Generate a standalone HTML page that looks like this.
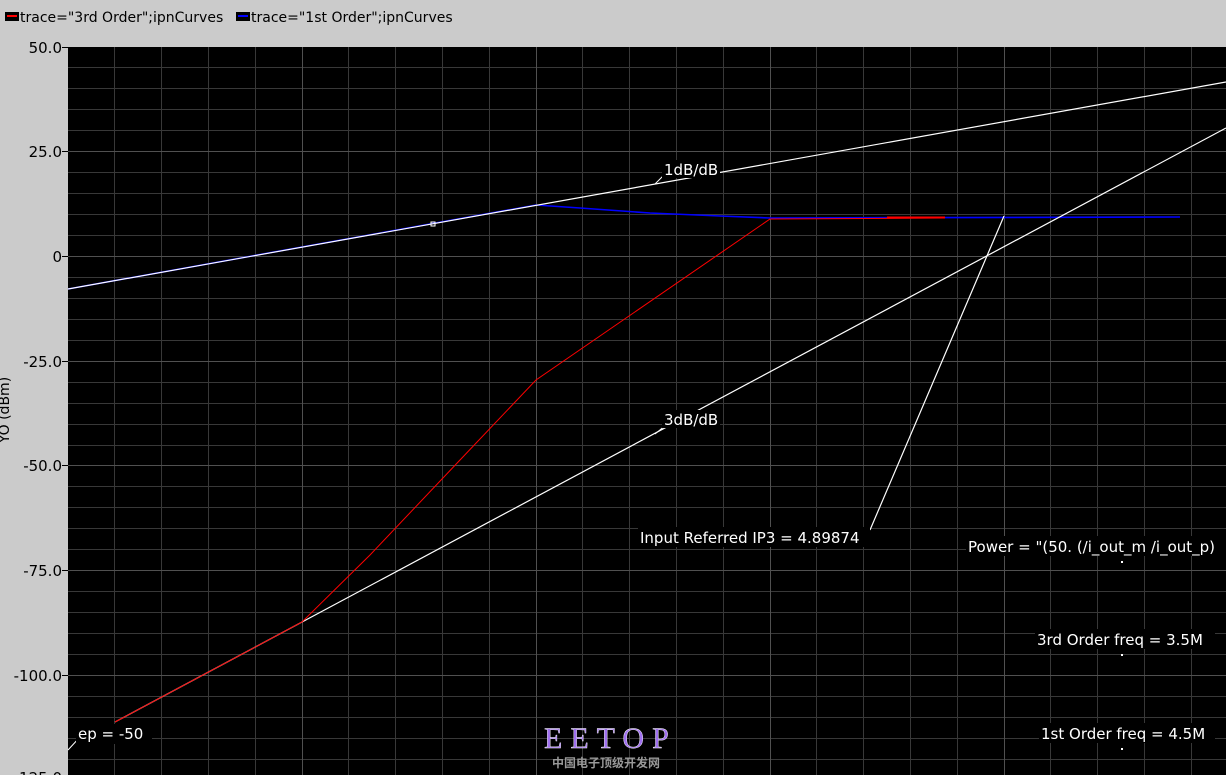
<!DOCTYPE html>
<html><head><style>
html,body{margin:0;padding:0;width:1226px;height:775px;overflow:hidden;background:#cbcbcb;font-family:"DejaVu Sans","Liberation Sans",sans-serif;}
</style></head><body>
<svg width="1226" height="775" xmlns="http://www.w3.org/2000/svg" style="position:absolute;left:0;top:0;font-family:'DejaVu Sans','Liberation Sans',sans-serif">
<rect x="0" y="0" width="1226" height="775" fill="#cbcbcb"/>
<rect x="5" y="12" width="14" height="9" fill="#000"/><line x1="7" y1="16" x2="17" y2="16" stroke="#f00" stroke-width="2"/>
<text x="20" y="22" font-size="14" fill="#000">trace="3rd Order";ipnCurves</text>
<rect x="236" y="12" width="14" height="9" fill="#000"/><line x1="238" y1="16" x2="248" y2="16" stroke="#00f" stroke-width="2"/>
<text x="251" y="22" font-size="14" fill="#000">trace="1st Order";ipnCurves</text>
<rect x="68" y="47" width="1158" height="728" fill="#000"/>
<g stroke="#383838" stroke-width="1">
<line x1="114.5" y1="47" x2="114.5" y2="775"/><line x1="161.5" y1="47" x2="161.5" y2="775"/><line x1="208.5" y1="47" x2="208.5" y2="775"/><line x1="255.5" y1="47" x2="255.5" y2="775"/>
<line x1="348.5" y1="47" x2="348.5" y2="775"/><line x1="395.5" y1="47" x2="395.5" y2="775"/><line x1="442.5" y1="47" x2="442.5" y2="775"/><line x1="489.5" y1="47" x2="489.5" y2="775"/>
<line x1="582.5" y1="47" x2="582.5" y2="775"/><line x1="629.5" y1="47" x2="629.5" y2="775"/><line x1="676.5" y1="47" x2="676.5" y2="775"/><line x1="723.5" y1="47" x2="723.5" y2="775"/>
<line x1="816.5" y1="47" x2="816.5" y2="775"/><line x1="863.5" y1="47" x2="863.5" y2="775"/><line x1="910.5" y1="47" x2="910.5" y2="775"/><line x1="957.5" y1="47" x2="957.5" y2="775"/>
<line x1="1050.5" y1="47" x2="1050.5" y2="775"/><line x1="1097.5" y1="47" x2="1097.5" y2="775"/><line x1="1144.5" y1="47" x2="1144.5" y2="775"/><line x1="1191.5" y1="47" x2="1191.5" y2="775"/>
<line x1="68" y1="67.5" x2="1226" y2="67.5"/><line x1="68" y1="88.5" x2="1226" y2="88.5"/><line x1="68" y1="109.5" x2="1226" y2="109.5"/><line x1="68" y1="130.5" x2="1226" y2="130.5"/>
<line x1="68" y1="172.5" x2="1226" y2="172.5"/><line x1="68" y1="193.5" x2="1226" y2="193.5"/><line x1="68" y1="214.5" x2="1226" y2="214.5"/><line x1="68" y1="235.5" x2="1226" y2="235.5"/>
<line x1="68" y1="277.5" x2="1226" y2="277.5"/><line x1="68" y1="298.5" x2="1226" y2="298.5"/><line x1="68" y1="319.5" x2="1226" y2="319.5"/><line x1="68" y1="340.5" x2="1226" y2="340.5"/>
<line x1="68" y1="382.5" x2="1226" y2="382.5"/><line x1="68" y1="403.5" x2="1226" y2="403.5"/><line x1="68" y1="424.5" x2="1226" y2="424.5"/><line x1="68" y1="445.5" x2="1226" y2="445.5"/>
<line x1="68" y1="486.5" x2="1226" y2="486.5"/><line x1="68" y1="507.5" x2="1226" y2="507.5"/><line x1="68" y1="528.5" x2="1226" y2="528.5"/><line x1="68" y1="549.5" x2="1226" y2="549.5"/>
<line x1="68" y1="591.5" x2="1226" y2="591.5"/><line x1="68" y1="612.5" x2="1226" y2="612.5"/><line x1="68" y1="633.5" x2="1226" y2="633.5"/><line x1="68" y1="654.5" x2="1226" y2="654.5"/>
<line x1="68" y1="696.5" x2="1226" y2="696.5"/><line x1="68" y1="717.5" x2="1226" y2="717.5"/><line x1="68" y1="738.5" x2="1226" y2="738.5"/><line x1="68" y1="759.5" x2="1226" y2="759.5"/>
</g>
<g stroke="#505050" stroke-width="1">
<line x1="302.5" y1="47" x2="302.5" y2="775"/><line x1="536.5" y1="47" x2="536.5" y2="775"/><line x1="770.5" y1="47" x2="770.5" y2="775"/><line x1="1004.5" y1="47" x2="1004.5" y2="775"/>
<line x1="68" y1="151.5" x2="1226" y2="151.5"/><line x1="68" y1="256.5" x2="1226" y2="256.5"/><line x1="68" y1="361.5" x2="1226" y2="361.5"/><line x1="68" y1="465.5" x2="1226" y2="465.5"/><line x1="68" y1="570.5" x2="1226" y2="570.5"/><line x1="68" y1="675.5" x2="1226" y2="675.5"/>
</g>
<g stroke="#000" stroke-width="1">
<line x1="62" y1="47.5" x2="68" y2="47.5"/><line x1="62" y1="151.5" x2="68" y2="151.5"/><line x1="62" y1="256.5" x2="68" y2="256.5"/><line x1="62" y1="361.5" x2="68" y2="361.5"/><line x1="62" y1="465.5" x2="68" y2="465.5"/><line x1="62" y1="570.5" x2="68" y2="570.5"/><line x1="62" y1="675.5" x2="68" y2="675.5"/>
</g>
<g font-size="15" fill="#000" text-anchor="end">
<text x="62" y="53">50.0</text><text x="62" y="157">25.0</text><text x="62" y="262">0</text><text x="62" y="367">-25.0</text><text x="62" y="471">-50.0</text><text x="62" y="576">-75.0</text><text x="62" y="681">-100.0</text><text x="62" y="783">-125.0</text>
</g>
<text transform="translate(9,410) rotate(-90)" font-size="14" fill="#000" text-anchor="middle">YO (dBm)</text>
<!-- blue 1st order -->
<polyline points="68,289 536,205 580,208 650,213 720,216 770,218 1180,217" fill="none" stroke="#00f" stroke-width="1.6"/>
<!-- 1dB/dB line -->
<line x1="68" y1="289" x2="1226" y2="82" stroke="#fff" stroke-width="1.2"/>
<!-- 3dB/dB line -->
<line x1="115" y1="722" x2="1226" y2="128" stroke="#fff" stroke-width="1.2"/>
<!-- red 3rd order -->
<polyline points="115,722 302,622 370,555 460,460 536,380 770,219 945,218" fill="none" stroke="#f00" stroke-width="1"/>
<line x1="887" y1="217.5" x2="945" y2="217.5" stroke="#f00" stroke-width="2"/>
<rect x="431" y="222" width="4" height="4" fill="none" stroke="#fff" stroke-width="1"/>
<line x1="870" y1="530" x2="1004" y2="216" stroke="#fff" stroke-width="1.2"/>
<line x1="655" y1="184" x2="665" y2="174" stroke="#fff"/>
<line x1="655" y1="434" x2="666" y2="425" stroke="#fff"/>
<line x1="68" y1="750" x2="80" y2="737" stroke="#fff"/>
<g font-size="15" fill="#fff">
<rect x="662" y="160" width="58" height="18" fill="#000"/><text x="664" y="175">1dB/dB</text>
<rect x="662" y="410" width="58" height="18" fill="#000"/><text x="664" y="425">3dB/dB</text>
<rect x="638" y="527" width="232" height="20" fill="#000"/><text x="640" y="543">Input Referred IP3 = 4.89874</text>
<rect x="966" y="536" width="260" height="20" fill="#000"/><text x="968" y="552">Power = "(50. (/i_out_m /i_out_p)</text>
<rect x="1035" y="629" width="180" height="20" fill="#000"/><text x="1037" y="645">3rd Order freq = 3.5M</text>
<rect x="1039" y="723" width="176" height="20" fill="#000"/><text x="1041" y="739">1st Order freq = 4.5M</text>
<rect x="76" y="724" width="76" height="20" fill="#000"/><text x="78" y="739">ep = -50</text>
</g>
<g fill="#fff"><rect x="1121" y="561" width="2" height="2"/><rect x="1121" y="654" width="2" height="2"/><rect x="1121" y="748" width="2" height="2"/></g>
<text x="544" y="748" font-family="Liberation Serif,serif" font-size="30" fill="#a070f0" letter-spacing="8" stroke="#fff" stroke-width="0.4">EETOP</text>
<text x="552" y="767" font-family="Liberation Sans,Noto Sans CJK SC,sans-serif" font-size="12" fill="#999" font-weight="bold">中国电子顶级开发网</text>
</svg>
</body></html>
